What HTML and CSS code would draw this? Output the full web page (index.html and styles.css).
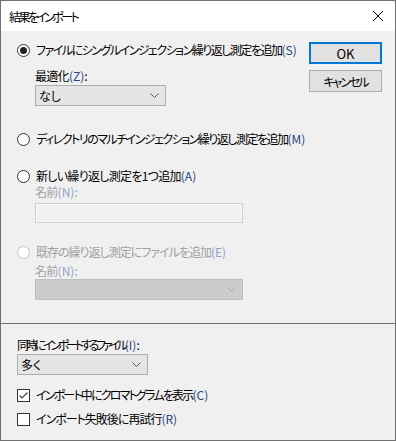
FILE: index.html
```html
<!DOCTYPE html>
<html lang="ja">
<head>
  <meta charset="UTF-8">
  <title>結果をインポート</title>
  <link rel="stylesheet" href="styles.css">
</head>
<body>
  <div class="dialog">
    <header class="titlebar">
      <span class="title">結果をインポート</span>
      <svg class="close" width="12" height="12" viewBox="0 0 12 12">
        <path d="M1 1 L11 11 M11 1 L1 11" stroke="#000" stroke-width="1" fill="none"/>
      </svg>
    </header>

    <main class="main">
      <div class="options">
        <!-- single injection -->
        <div class="row first">
          <span class="radio checked"></span>
          <span class="sq-3">ファイルにシングルインジェクション繰り返し測定を追加<span class="key">(S)</span></span>
        </div>
        <div class="sub">
          <div class="field-label gap-opt sq-1">最適化<span class="key">(Z)</span>:</div>
          <div class="select opt">
            <span>なし</span>
            <svg class="chev" width="9" height="5" viewBox="0 0 9 5"><path d="M0.5 0.5 L4.5 4.5 L8.5 0.5" stroke="#555" fill="none"/></svg>
          </div>
        </div>

        <!-- multi injection -->
        <div class="row gap-multi">
          <span class="radio"></span>
          <span class="sq-3">ディレクトリのマルチインジェクション繰り返し測定を追加<span class="key">(M)</span></span>
        </div>

        <!-- new replicate -->
        <div class="row gap-new">
          <span class="radio"></span>
          <span class="sq-1">新しい繰り返し測定を1つ追加<span class="key">(A)</span></span>
        </div>
        <div class="sub">
          <div class="field-label disabled sq-1">名前<span class="key dim">(N)</span>:</div>
          <div class="textbox"></div>
        </div>

        <!-- existing replicate -->
        <div class="row disabled gap-exist">
          <span class="radio off"></span>
          <span class="sq-2">既存の繰り返し測定にファイルを追加<span class="key dim">(E)</span></span>
        </div>
        <div class="sub">
          <div class="field-label disabled gap-name sq-1">名前<span class="key dim">(N)</span>:</div>
          <div class="select wide off">
            <svg class="chev" width="9" height="5" viewBox="0 0 9 5"><path d="M0.5 0.5 L4.5 4.5 L8.5 0.5" stroke="#a6a6a6" fill="none"/></svg>
          </div>
        </div>
      </div>

      <div class="buttons">
        <div class="btn default">OK</div>
        <div class="btn sq-5">キャンセル</div>
      </div>
    </main>

    <section class="bottom">
      <div class="field-label sq-6">同時にインポートするファイル<span class="key">(I)</span>:</div>
      <div class="select opt">
        <span>多く</span>
        <svg class="chev" width="9" height="5" viewBox="0 0 9 5"><path d="M0.5 0.5 L4.5 4.5 L8.5 0.5" stroke="#555" fill="none"/></svg>
      </div>

      <div class="row gap-check1">
        <span class="check">
          <svg width="11" height="11" viewBox="0 0 11 11"><path d="M1.5 5.5 L4 8 L9.5 2.5" stroke="#444" stroke-width="1.2" fill="none"/></svg>
        </span>
        <span class="sq-4">インポート中にクロマトグラムを表示<span class="key">(C)</span></span>
      </div>
      <div class="row gap-check2">
        <span class="check"></span>
        <span class="sq-2">インポート失敗後に再試行<span class="key">(R)</span></span>
      </div>
    </section>
  </div>
</body>
</html>
```

FILE: styles.css
```css
body {
  margin: 0;
  font-family: "Noto Sans CJK JP", "Noto Sans", sans-serif;
  font-size: 12px;
  font-feature-settings: "palt";
  color: #000;
}

.sq-1 { letter-spacing: -0.7px; }
.sq-2 { letter-spacing: -1px; }
.sq-3 { letter-spacing: -1.5px; }
.sq-4 { letter-spacing: -1.8px; }
.sq-5 { letter-spacing: -2px; }
.sq-6 { letter-spacing: -3.2px; }

.dialog {
  width: 396px;
  height: 441px;
  box-sizing: border-box;
  border: 1px solid #707070;
  background: #f0f0f0;
  display: flex;
  flex-direction: column;
}

.titlebar {
  height: 30px;
  background: #fff;
  display: flex;
  align-items: center;
  justify-content: space-between;
  padding: 0 11px 0 8px;
  flex-shrink: 0;
}

.title {
  font-size: 12px;
  letter-spacing: -2.6px;
}

.main {
  height: 292px;
  box-sizing: border-box;
  padding: 11px 13px 0 16px;
  display: flex;
  justify-content: space-between;
  flex-shrink: 0;
}

.options {
  flex: 1;
  min-width: 0;
}

.row {
  display: flex;
  align-items: center;
  gap: 6px;
  height: 16px;
  line-height: 16px;
  white-space: nowrap;
}

.row.disabled,
.field-label.disabled {
  color: #a0a0a0;
}

.key {
  color: #27467e;
  letter-spacing: 0;
}

.key.dim {
  color: #8fa3c4;
}

.radio {
  width: 13px;
  height: 13px;
  box-sizing: border-box;
  border: 1px solid #333;
  border-radius: 50%;
  background: #fff;
  display: flex;
  align-items: center;
  justify-content: center;
  flex-shrink: 0;
}

.radio.checked::after {
  content: "";
  width: 7px;
  height: 7px;
  border-radius: 50%;
  background: #222;
}

.radio.off {
  border-color: #c2c2c2;
}

.sub {
  padding-left: 18px;
}

.field-label {
  height: 16px;
  line-height: 16px;
  white-space: nowrap;
}

.gap-opt { margin-top: 10px; }
.gap-multi { margin-top: 25px; }
.gap-new { margin-top: 21px; }
.gap-exist { margin-top: 21px; }
.gap-name { margin-top: 3px; }

.select {
  margin-top: 1px;
  height: 21px;
  box-sizing: border-box;
  border: 1px solid #adadad;
  background: #e5e5e5;
  display: flex;
  align-items: center;
  justify-content: space-between;
  padding: 0 6px 0 3px;
}

.select.opt {
  width: 131px;
}

.select.wide {
  width: 208px;
}

.select.off {
  margin-top: 0;
  justify-content: flex-end;
  background: #cccccc;
  border-color: #bfbfbf;
}

.textbox {
  margin-top: 3px;
  width: 208px;
  height: 20px;
  box-sizing: border-box;
  border: 1px solid #cfcfcf;
  box-shadow: inset 0 0 0 1px #f7f7f7;
  background: #f0f0f0;
}

.buttons {
  display: flex;
  flex-direction: column;
  gap: 6px;
  flex-shrink: 0;
}

.btn {
  width: 73px;
  height: 22px;
  box-sizing: border-box;
  border: 1px solid #adadad;
  background: #e1e1e1;
  display: flex;
  align-items: center;
  justify-content: center;
}

.btn.default {
  border: 2px solid #0078d7;
  font-size: 13px;
}

.bottom {
  border-top: 1px solid #6f6f6f;
  padding: 13px 16px 0 16px;
  flex: 1;
}

.check {
  width: 13px;
  height: 13px;
  box-sizing: border-box;
  border: 1px solid #333;
  background: #fff;
  display: flex;
  align-items: center;
  justify-content: center;
  flex-shrink: 0;
}

.gap-check1 { margin-top: 12px; }
.gap-check2 { margin-top: 8px; }
```
